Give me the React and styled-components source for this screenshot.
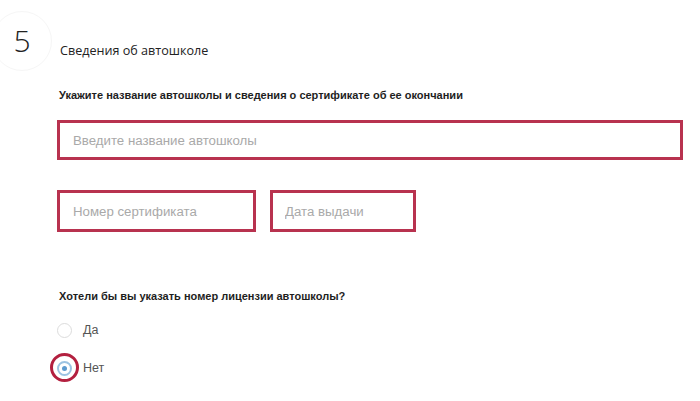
import React from "react";
import styled, { createGlobalStyle } from "styled-components";

const GlobalStyle = createGlobalStyle`
  html, body {
    margin: 0;
    padding: 0;
    background: #fff;
  }
  body {
    font-family: "Liberation Sans", Arial, sans-serif;
    width: 700px;
    height: 401px;
    overflow: hidden;
  }
`;

const ACCENT = "#b8324f";

const Page = styled.div`
  display: flex;
  flex-direction: column;
`;

const Header = styled.div`
  display: flex;
  align-items: flex-start;
`;

const Step = styled.div`
  width: 60px;
  height: 60px;
  margin: 11px 0 0 -8px;
  border: 1px solid #f6f6f6;
  border-radius: 50%;
  box-sizing: border-box;
  display: flex;
  align-items: center;
  justify-content: center;
  font-family: "Open Sans", sans-serif;
  font-weight: 300;
  font-size: 30px;
  line-height: 30px;
  color: #222;
`;

const Title = styled.h2`
  margin: 42px 0 0 8px;
  font-family: "Open Sans", sans-serif;
  font-weight: 400;
  font-size: 12.6px;
  line-height: 18px;
  color: #222;
`;

const Form = styled.div`
  display: flex;
  flex-direction: column;
  padding-left: 57px;
`;

const Label = styled.p`
  margin: ${(p) => p.$top}px 0 0 2px;
  font-size: 11px;
  line-height: 14px;
  font-weight: 700;
  color: #1e1e1e;
`;

const Field = styled.input`
  box-sizing: border-box;
  width: ${(p) => p.$width}px;
  height: ${(p) => p.$height}px;
  border: 3px solid ${ACCENT};
  padding: 0 0 0 ${(p) => p.$pad}px;
  margin: 0;
  font-family: "Liberation Sans", Arial, sans-serif;
  font-size: 13.25px;
  color: #333;
  background: #fff;
  outline: none;
  &::placeholder {
    color: #a9a9a9;
  }
`;

const BigField = styled(Field)`
  margin-top: 18px;
`;

const FieldRow = styled.div`
  display: flex;
  gap: 14px;
  margin-top: 30px;
`;

const Options = styled.div`
  display: flex;
  flex-direction: column;
  gap: 18px;
  margin-top: 17px;
`;

const Option = styled.label`
  display: flex;
  align-items: center;
  gap: 11px;
  height: 20px;
  font-size: 12.5px;
  color: #555;
`;

const RadioMark = styled.span`
  position: relative;
  box-sizing: border-box;
  width: 15px;
  height: 15px;
  border-radius: 50%;
  border: ${(p) => (p.$checked ? "2px solid #9cc3e2" : "1px solid #dcdcdc")};
  display: flex;
  align-items: center;
  justify-content: center;
  background: #fff;
  &::before {
    content: "";
    display: ${(p) => (p.$checked ? "block" : "none")};
    width: 5px;
    height: 5px;
    border-radius: 50%;
    background: #5d9bcf;
  }
`;

const Highlight = styled.span`
  position: absolute;
  left: 50%;
  top: 50%;
  width: 29px;
  height: 29px;
  margin: -15px 0 0 -15px;
  border: 3px solid #b3203f;
  border-radius: 50%;
  box-sizing: border-box;
  pointer-events: none;
`;

function Radio({ label, checked }) {
  return (
    <Option>
      <RadioMark $checked={checked}>{checked && <Highlight />}</RadioMark>
      {label}
    </Option>
  );
}

export default function App() {
  return (
    <>
      <GlobalStyle />
      <Page>
        <Header>
          <Step>5</Step>
          <Title>Сведения об автошколе</Title>
        </Header>
        <Form>
          <Label $top={17}>
            Укажите название автошколы и сведения о сертификате об ее окончании
          </Label>
          <BigField
            readOnly
            placeholder="Введите название автошколы"
            $width={626}
            $height={40}
            $pad={13}
          />
          <FieldRow>
            <Field readOnly placeholder="Номер сертификата" $width={199} $height={42} $pad={13} />
            <Field readOnly placeholder="Дата выдачи" $width={146} $height={42} $pad={12} />
          </FieldRow>
          <Label $top={57}>Хотели бы вы указать номер лицензии автошколы?</Label>
          <Options>
            <Radio label="Да" />
            <Radio label="Нет" checked />
          </Options>
        </Form>
      </Page>
    </>
  );
}
